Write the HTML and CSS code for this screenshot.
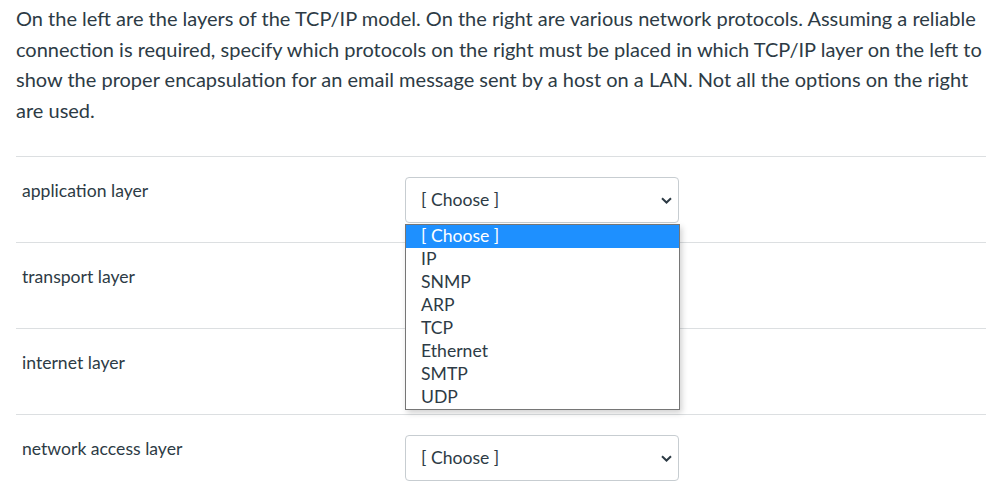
FILE: index.html
```
<!DOCTYPE html>
<html lang="en">
<head>
  <meta charset="UTF-8">
  <meta name="viewport" content="width=device-width, initial-scale=1.0">
  <title>Question</title>
  <link rel="stylesheet" href="styles.css">
</head>
<body>
  <div class="question">
    <p class="text">On the left are the layers of the TCP/IP model. On the right are various network protocols. Assuming a reliable connection is required, specify which protocols on the right must be placed in which TCP/IP layer on the left to show the proper encapsulation for an email message sent by a host on a LAN. Not all the options on the right are used.</p>
    <div class="answers">
      <div class="row">
        <div class="label">application layer</div>
        <div class="pick">
          <div class="select">[ Choose ]
            <svg class="chev" width="11" height="7" viewBox="0 0 11 7"><path d="M1 1.2 L5.5 5.5 L10 1.2" fill="none" stroke="#2d3b45" stroke-width="2"/></svg>
          </div>
          <ul class="menu">
            <li class="on">[ Choose ]</li>
            <li>IP</li>
            <li>SNMP</li>
            <li>ARP</li>
            <li>TCP</li>
            <li>Ethernet</li>
            <li>SMTP</li>
            <li>UDP</li>
          </ul>
        </div>
      </div>
      <div class="row">
        <div class="label">transport layer</div>
        <div class="pick">
          <div class="select">[ Choose ]
            <svg class="chev" width="11" height="7" viewBox="0 0 11 7"><path d="M1 1.2 L5.5 5.5 L10 1.2" fill="none" stroke="#2d3b45" stroke-width="2"/></svg>
          </div>
        </div>
      </div>
      <div class="row">
        <div class="label">internet layer</div>
        <div class="pick">
          <div class="select">[ Choose ]
            <svg class="chev" width="11" height="7" viewBox="0 0 11 7"><path d="M1 1.2 L5.5 5.5 L10 1.2" fill="none" stroke="#2d3b45" stroke-width="2"/></svg>
          </div>
        </div>
      </div>
      <div class="row">
        <div class="label">network access layer</div>
        <div class="pick">
          <div class="select">[ Choose ]
            <svg class="chev" width="11" height="7" viewBox="0 0 11 7"><path d="M1 1.2 L5.5 5.5 L10 1.2" fill="none" stroke="#2d3b45" stroke-width="2"/></svg>
          </div>
        </div>
      </div>
    </div>
  </div>
</body>
</html>
```
FILE: styles.css
```
* {
  margin: 0;
  padding: 0;
  box-sizing: border-box;
  list-style: none;
}
body {
  font-family: Lato, "Liberation Sans", sans-serif;
  color: #2d3b45;
  background: #fff;
}
.question {
  width: 986px;
  padding-left: 16px;
}
.text {
  font-size: 20px;
  line-height: 30.5px;
  padding-top: 3px;
  margin-bottom: 31px;
}
.row {
  display: grid;
  grid-template-columns: 389px 274px;
  height: 86px;
  border-top: 1px solid #dcdfe1;
}
.label {
  font-size: 17.6px;
  line-height: 24px;
  padding: 22px 0 0 6px;
}
.pick {
  position: relative;
  padding-top: 20px;
}
.select {
  height: 46px;
  border: 1px solid #c7cdd1;
  border-radius: 4px;
  padding: 10px 0 0 15px;
  font-size: 17.6px;
  line-height: 24px;
  position: relative;
}
.chev {
  position: absolute;
  right: 6px;
  top: 19px;
}
.menu {
  position: absolute;
  top: 67px;
  left: 0;
  width: 275px;
  border: 1px solid #767676;
  background: #fff;
  box-shadow: 2px 3px 6px rgba(0, 0, 0, 0.18);
  font-size: 17.6px;
  z-index: 2;
}
.menu li {
  height: 23px;
  line-height: 22px;
  padding-left: 15px;
}
.menu li.on {
  background: #1e90ff;
  color: #fff;
}
```
